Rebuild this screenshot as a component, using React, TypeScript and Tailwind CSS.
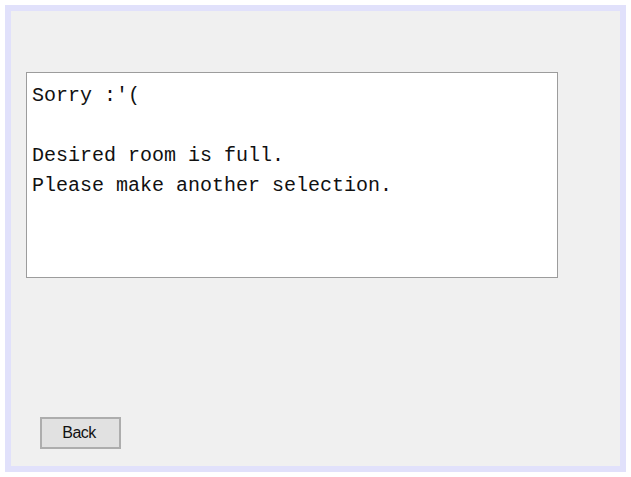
import React from 'react';

export default function App() {
  return (
    <div className="w-[631px] h-[477px] bg-white p-[5px]">
      <div className="w-full h-full border-[6px] border-[#e1e1fb] bg-[#f0f0f0] flex flex-col pt-[61px] pl-[15px] pb-[17px]">
        <div className="w-[532px] h-[206px] bg-white border border-[#9c9c9c] pt-[8px] pl-[5px]">
          <pre className="font-['Liberation_Mono','Courier_New',monospace] text-[20px] leading-[30px] text-[#111]">
{`Sorry :'(

Desired room is full.
Please make another selection.`}
          </pre>
        </div>
        <button
          type="button"
          className="mt-auto ml-[14px] w-[81px] h-[32px] bg-[#e1e1e1] border-2 border-[#adadad] font-['Liberation_Sans',Arial,sans-serif] text-[16px] tracking-[-0.5px] text-[#111] flex items-center justify-center pr-[3px]"
        >
          Back
        </button>
      </div>
    </div>
  );
}
